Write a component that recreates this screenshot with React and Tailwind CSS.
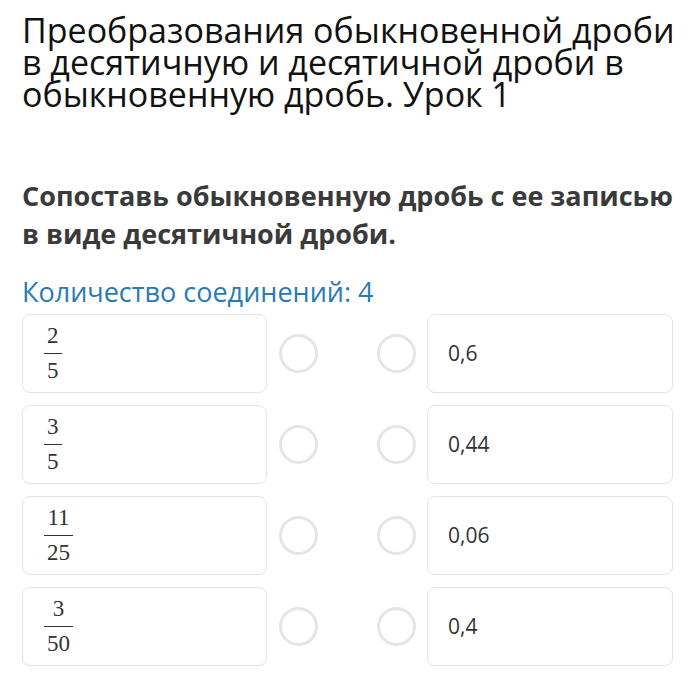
import React from "react";

const rows = [
  { n: "2", d: "5", v: "0,6" },
  { n: "3", d: "5", v: "0,44" },
  { n: "11", d: "25", v: "0,06" },
  { n: "3", d: "50", v: "0,4" },
];

function Frac({ n, d }) {
  return (
    <div className="inline-flex flex-col items-center text-[23px] leading-[24px] text-[#333]" style={{ fontFamily: '"Liberation Serif", "DejaVu Serif", serif' }}>
      <span className="px-[3px]">{n}</span>
      <span className="block self-stretch h-[1.5px] bg-[#333] my-[5px]"></span>
      <span className="px-[3px]">{d}</span>
    </div>
  );
}

function Circle() {
  return <div className="w-[39px] h-[39px] rounded-full border-[3px] border-[#e3e5e6]"></div>;
}

export default function App() {
  return (
    <div className="min-h-[695px] bg-white pl-[22px] pt-[14px]" style={{ fontFamily: '"Open Sans", "Noto Sans", sans-serif' }}>
      <h1 className="text-[34px] leading-[32px] text-[#111] font-normal pr-[12px]">
        Преобразования обыкновенной дроби в десятичную и десятичной дроби в обыкновенную дробь. Урок 1
      </h1>
      <h2 className="mt-[67px] text-[27px] leading-[38px] font-bold text-[#3a3a3a] pr-[6px]">
        Сопоставь обыкновенную дробь с ее записью в виде десятичной дроби.
      </h2>
      <div className="mt-[24px] text-[27px] leading-[30px] text-[#2a7ab3]">Количество соединений: 4</div>
      <div className="mt-[7px] flex flex-col gap-[12px]">
        {rows.map((r, i) => (
          <div key={i} className="flex items-center h-[79px]">
            <div className="w-[245px] h-full rounded-[8px] border border-[#e4e4e4] flex items-center pl-[21px]">
              <Frac n={r.n} d={r.d} />
            </div>
            <div className="ml-[12px]"><Circle /></div>
            <div className="ml-[59px]"><Circle /></div>
            <div className="ml-[11px] w-[246px] h-full rounded-[8px] border border-[#e4e4e4] flex items-center pl-[20px] text-[21px] text-[#333]">
              {r.v}
            </div>
          </div>
        ))}
      </div>
    </div>
  );
}
